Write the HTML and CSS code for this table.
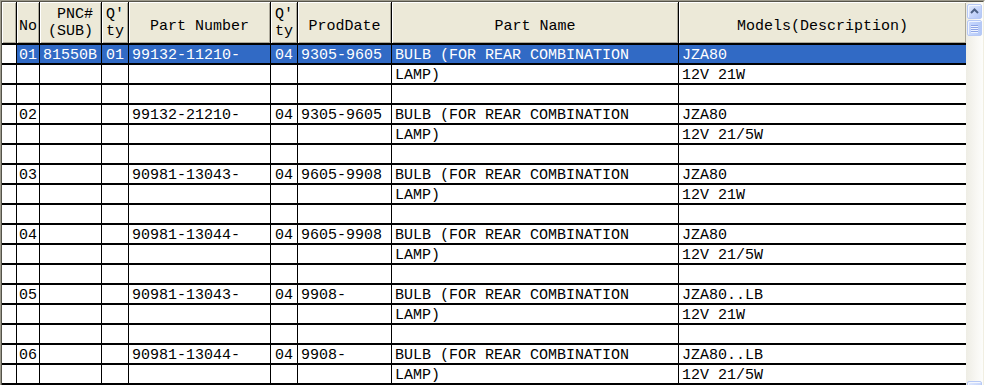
FILE: index.html
```html
<!DOCTYPE html>
<html lang="en">
<head>
<meta charset="utf-8">
<title>Parts List</title>
<link rel="stylesheet" href="styles.css">
</head>
<body>
<div class="frame">
  <div class="frame-inner">
    <div class="sheet">
      <div class="row head">
        <div class="c"></div>
        <div class="c">No</div>
        <div class="c two"> PNC#
(SUB)</div>
        <div class="c two">Q'
ty</div>
        <div class="c">Part Number</div>
        <div class="c two">Q'
ty</div>
        <div class="c">ProdDate</div>
        <div class="c">Part Name</div>
        <div class="c last">Models(Description)</div>
      </div>

      <div class="row sel">
        <div class="c pick"></div><div class="c mid">01</div><div class="c">81550B</div><div class="c mid">01</div><div class="c">99132-11210-</div><div class="c mid">04</div><div class="c">9305-9605</div><div class="c">BULB (FOR REAR COMBINATION</div><div class="c last">JZA80</div>
      </div>
      <div class="row">
        <div class="c pick"></div><div class="c mid"></div><div class="c"></div><div class="c mid"></div><div class="c"></div><div class="c mid"></div><div class="c"></div><div class="c">LAMP)</div><div class="c last">12V 21W</div>
      </div>
      <div class="row">
        <div class="c pick"></div><div class="c"></div><div class="c"></div><div class="c"></div><div class="c"></div><div class="c"></div><div class="c"></div><div class="c"></div><div class="c last"></div>
      </div>

      <div class="row">
        <div class="c pick"></div><div class="c mid">02</div><div class="c"></div><div class="c mid"></div><div class="c">99132-21210-</div><div class="c mid">04</div><div class="c">9305-9605</div><div class="c">BULB (FOR REAR COMBINATION</div><div class="c last">JZA80</div>
      </div>
      <div class="row">
        <div class="c pick"></div><div class="c"></div><div class="c"></div><div class="c"></div><div class="c"></div><div class="c"></div><div class="c"></div><div class="c">LAMP)</div><div class="c last">12V 21/5W</div>
      </div>
      <div class="row">
        <div class="c pick"></div><div class="c"></div><div class="c"></div><div class="c"></div><div class="c"></div><div class="c"></div><div class="c"></div><div class="c"></div><div class="c last"></div>
      </div>

      <div class="row">
        <div class="c pick"></div><div class="c mid">03</div><div class="c"></div><div class="c mid"></div><div class="c">90981-13043-</div><div class="c mid">04</div><div class="c">9605-9908</div><div class="c">BULB (FOR REAR COMBINATION</div><div class="c last">JZA80</div>
      </div>
      <div class="row">
        <div class="c pick"></div><div class="c"></div><div class="c"></div><div class="c"></div><div class="c"></div><div class="c"></div><div class="c"></div><div class="c">LAMP)</div><div class="c last">12V 21W</div>
      </div>
      <div class="row">
        <div class="c pick"></div><div class="c"></div><div class="c"></div><div class="c"></div><div class="c"></div><div class="c"></div><div class="c"></div><div class="c"></div><div class="c last"></div>
      </div>

      <div class="row">
        <div class="c pick"></div><div class="c mid">04</div><div class="c"></div><div class="c mid"></div><div class="c">90981-13044-</div><div class="c mid">04</div><div class="c">9605-9908</div><div class="c">BULB (FOR REAR COMBINATION</div><div class="c last">JZA80</div>
      </div>
      <div class="row">
        <div class="c pick"></div><div class="c"></div><div class="c"></div><div class="c"></div><div class="c"></div><div class="c"></div><div class="c"></div><div class="c">LAMP)</div><div class="c last">12V 21/5W</div>
      </div>
      <div class="row">
        <div class="c pick"></div><div class="c"></div><div class="c"></div><div class="c"></div><div class="c"></div><div class="c"></div><div class="c"></div><div class="c"></div><div class="c last"></div>
      </div>

      <div class="row">
        <div class="c pick"></div><div class="c mid">05</div><div class="c"></div><div class="c mid"></div><div class="c">90981-13043-</div><div class="c mid">04</div><div class="c">9908-</div><div class="c">BULB (FOR REAR COMBINATION</div><div class="c last">JZA80..LB</div>
      </div>
      <div class="row">
        <div class="c pick"></div><div class="c"></div><div class="c"></div><div class="c"></div><div class="c"></div><div class="c"></div><div class="c"></div><div class="c">LAMP)</div><div class="c last">12V 21W</div>
      </div>
      <div class="row">
        <div class="c pick"></div><div class="c"></div><div class="c"></div><div class="c"></div><div class="c"></div><div class="c"></div><div class="c"></div><div class="c"></div><div class="c last"></div>
      </div>

      <div class="row">
        <div class="c pick"></div><div class="c mid">06</div><div class="c"></div><div class="c mid"></div><div class="c">90981-13044-</div><div class="c mid">04</div><div class="c">9908-</div><div class="c">BULB (FOR REAR COMBINATION</div><div class="c last">JZA80..LB</div>
      </div>
      <div class="row">
        <div class="c pick"></div><div class="c"></div><div class="c"></div><div class="c"></div><div class="c"></div><div class="c"></div><div class="c"></div><div class="c">LAMP)</div><div class="c last">12V 21/5W</div>
      </div>
      <div class="row">
        <div class="c pick"></div><div class="c"></div><div class="c"></div><div class="c"></div><div class="c"></div><div class="c"></div><div class="c"></div><div class="c"></div><div class="c last"></div>
      </div>
    </div>

    <div class="scroll">
      <div class="sb-btn">
        <svg width="15" height="15" viewBox="0 0 15 15"><path d="M4 9 L7.5 5.5 L11 9" fill="none" stroke="#4d6185" stroke-width="2"/></svg>
      </div>
      <div class="sb-thumb">
        <span></span><span></span><span></span><span></span>
      </div>
      <div class="sb-track"></div>
      <div class="sb-btn">
        <svg width="15" height="15" viewBox="0 0 15 15"><path d="M4 6 L7.5 9.5 L11 6" fill="none" stroke="#4d6185" stroke-width="2"/></svg>
      </div>
    </div>
  </div>
</div>
</body>
</html>
```

FILE: styles.css
```css
html, body {
  margin: 0;
  padding: 0;
}

body {
  width: 985px;
  height: 385px;
  overflow: hidden;
  background: #ece9d8;
  font-family: "Liberation Mono", "DejaVu Sans Mono", monospace;
  font-size: 15px;
  color: #000;
}

/* sunken 3D frame around the grid control */
.frame {
  width: 985px;
  height: 398px;
  box-sizing: border-box;
  border: 1px solid;
  border-color: #9d9a8c #ffffff #ffffff #9d9a8c;
}

.frame-inner {
  height: 100%;
  box-sizing: border-box;
  border: 1px solid;
  border-color: #555349 #f1efe2 #f1efe2 #555349;
  display: flex;
  background: #fff;
}

.sheet {
  width: 964px;
  overflow: hidden;
}

.row {
  display: grid;
  grid-template-columns: 15px 23px 62px 27px 142px 27px 94px 287px 287px;
  height: 20px;
}

.c {
  box-sizing: border-box;
  border-right: 1px solid #000;
  border-bottom: 2px solid #000;
  padding: 2px 0 0 3px;
  line-height: 17px;
  white-space: pre;
  overflow: hidden;
}

.c.mid {
  text-align: center;
  padding-left: 0;
}

.c.last {
  border-right: 0;
}

/* header band */
.row.head {
  height: 43px;
  background: #ece9d8;
}

.head .c {
  padding: 16px 0 0;
  text-align: center;
  box-shadow: inset 1px 1px 0 #ffffff, inset -1px -1px 0 #aca899;
}

.head .c.two {
  padding-top: 4px;
}

/* highlighted record */
.row.sel .c {
  background: #316ac5;
  color: #fff;
}

.row.sel .c.pick {
  background: #fff;
}

/* XP style vertical scrollbar */
.scroll {
  width: 17px;
  display: flex;
  flex-direction: column;
  align-items: center;
  background: linear-gradient(to right, #eeede5, #f8f7f3 60%, #fdfdfb);
}

.sb-btn {
  width: 15px;
  height: 15px;
  margin-top: 2px;
  box-sizing: border-box;
  border: 1px solid #b7c9f5;
  border-radius: 2px;
  background: linear-gradient(135deg, #e3ebfd 0%, #c7d6fb 55%, #b2c6f6 100%);
  box-shadow: inset 1px 1px 0 #f4f7fe;
  display: flex;
  align-items: center;
  justify-content: center;
}

.sb-btn svg {
  display: block;
  margin: -1px;
}

.sb-thumb {
  width: 15px;
  height: 16px;
  margin-top: 1px;
  box-sizing: border-box;
  border: 1px solid #b7c9f5;
  border-radius: 2px;
  background: linear-gradient(to right, #c9d8fc, #bccffb 60%, #b4c8f6);
  box-shadow: inset 1px 1px 0 #f1f5fe;
  display: flex;
  flex-direction: column;
  align-items: center;
  justify-content: center;
  gap: 1px;
}

.sb-thumb span {
  width: 7px;
  height: 1px;
  background: #8ea4e6;
  box-shadow: 0 1px 0 #eef3fe;
}

.sb-track {
  flex: 1;
}
```
